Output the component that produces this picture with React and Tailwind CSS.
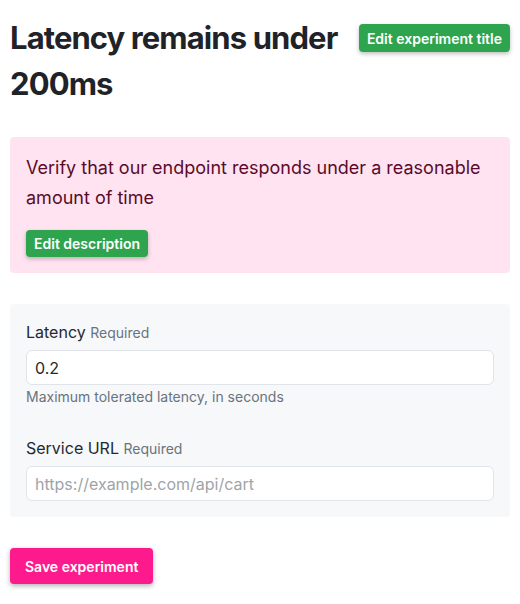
import React, { useState } from 'react';

function App() {
  const [latency, setLatency] = useState('0.2');
  const [url, setUrl] = useState('');

  return (
    <div className="p-[10px] text-[#24292e]" style={{ fontFamily: 'Inter, "Noto Sans", sans-serif' }}>
      <div className="flex items-start justify-between gap-[8px] pt-[5px]">
        <h1 className="text-[31px] font-bold leading-[46px] tracking-[-0.9px] text-[#1f2328]">
          Latency remains under 200ms
        </h1>
        <button
          type="button"
          className="mt-[9px] shrink-0 whitespace-nowrap rounded-[4px] bg-[#2ea44f] px-[8px] h-[28px] text-[14px] font-semibold text-white shadow-[0_2px_4px_rgba(0,0,0,0.25)]"
        >
          Edit experiment title
        </button>
      </div>

      <div className="mt-[30px] rounded-[4px] bg-[#ffe3f0] px-[16px] pt-[16px] pb-[16px]">
        <p className="text-[18px] leading-[30px] text-[#5a0b2b]">
          Verify that our endpoint responds under a reasonable amount of time
        </p>
        <button
          type="button"
          className="mt-[17px] rounded-[4px] bg-[#2ea44f] px-[8px] h-[27px] text-[14px] font-semibold text-white shadow-[0_2px_4px_rgba(0,0,0,0.25)]"
        >
          Edit description
        </button>
      </div>

      <div className="mt-[31px] rounded-[4px] bg-[#f6f8fa] px-[16px] pt-[18px] pb-[16px]">
        <div>
          <label className="block text-[16px] leading-[20px] text-[#24292e]">
            Latency <span className="text-[14px] text-[#6a737d]">Required</span>
          </label>
          <input
            value={latency}
            onChange={(e) => setLatency(e.target.value)}
            className="mt-[7px] block w-full h-[35px] rounded-[6px] border border-[#e1e4e8] bg-white px-[8px] text-[16px] text-[#24292e] outline-none"
          />
          <p className="mt-[1px] text-[14px] leading-[22px] text-[#6a737d]">
            Maximum tolerated latency, in seconds
          </p>
        </div>
        <div className="mt-[30px]">
          <label className="block text-[16px] leading-[20px] text-[#24292e]">
            Service URL <span className="text-[14px] text-[#6a737d]">Required</span>
          </label>
          <input
            value={url}
            onChange={(e) => setUrl(e.target.value)}
            placeholder="https://example.com/api/cart"
            className="mt-[7px] block w-full h-[35px] rounded-[6px] border border-[#e1e4e8] bg-white px-[8px] text-[16px] text-[#24292e] outline-none placeholder:text-[#a0a4a8]"
          />
        </div>
      </div>

      <button
        type="button"
        className="mt-[31px] rounded-[4px] bg-[#fd1a8c] px-[15px] h-[36px] text-[14px] font-semibold text-white shadow-[0_2px_5px_rgba(0,0,0,0.3)]"
      >
        Save experiment
      </button>
    </div>
  );
}

export default App;
